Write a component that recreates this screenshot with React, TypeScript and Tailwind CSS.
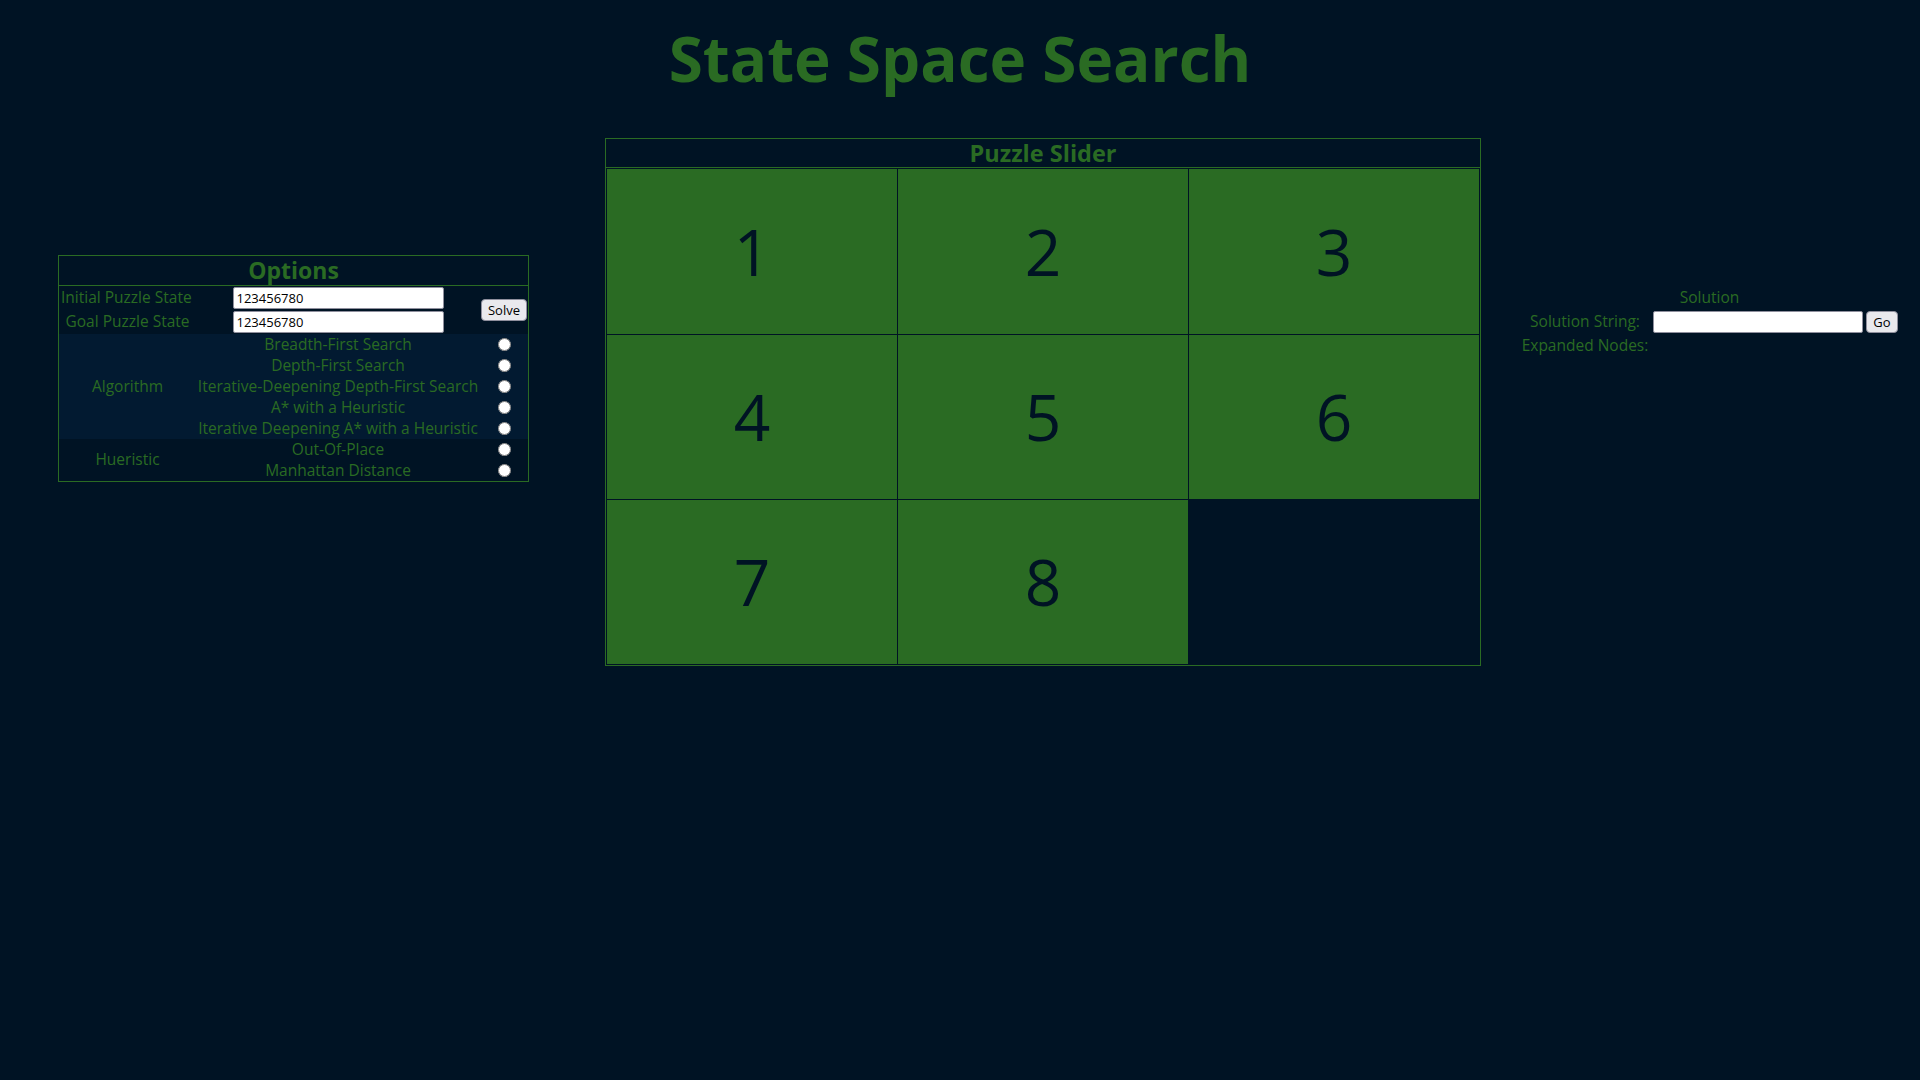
const GREEN = 'text-[#2a6b23]';

const algorithms = [
  'Breadth-First Search',
  'Depth-First Search',
  'Iterative-Deepening Depth-First Search',
  'A* with a Heuristic',
  'Iterative Deepening A* with a Heuristic',
];

const heuristics = ['Out-Of-Place', 'Manhattan Distance'];

const tiles = [1, 2, 3, 4, 5, 6, 7, 8, 0];

function Options() {
  return (
    <div className="w-[471px] ml-[58px] mt-[117px] border border-[#2a6b23] shrink-0">
      {/* Header */}
      <div className="h-[30px] border-b border-[#2a6b23] text-center text-[23px] font-bold leading-[29px]">
        Options
      </div>

      {/* Puzzle states */}
      <div className="grid grid-cols-[137px_284px_48px] grid-rows-[24px_24px]">
        <div className="flex items-center pl-[2px] whitespace-nowrap">Initial Puzzle State</div>
        <div className="flex items-center justify-center">
          <input
            type="text"
            defaultValue="123456780"
            className="w-[211px] h-[22px] bg-white text-black text-[13px] px-[3px] border border-[#8f8f9d] rounded-[2px] outline-none"
          />
        </div>
        <div className="row-span-2 flex items-center justify-center">
          <button className="h-[22px] px-[6px] text-[13px] text-black bg-[#e9e9ed] border border-[#8f8f9d] rounded-[4px] leading-none">
            Solve
          </button>
        </div>
        <div className="flex items-center justify-center whitespace-nowrap">Goal Puzzle State</div>
        <div className="flex items-center justify-center">
          <input
            type="text"
            defaultValue="123456780"
            className="w-[211px] h-[22px] bg-white text-black text-[13px] px-[3px] border border-[#8f8f9d] rounded-[2px] outline-none"
          />
        </div>
      </div>

      {/* Algorithm */}
      <div className="grid grid-cols-[137px_284px_48px] auto-rows-[21px] bg-[#021a31]">
        <div className="row-span-5 flex items-center justify-center">Algorithm</div>
        {algorithms.map((a) => (
          <div key={a} className="contents">
            <div className="flex items-center justify-center whitespace-nowrap leading-[21px]">{a}</div>
            <div className="flex items-center justify-center">
              <input type="radio" name="algorithm" className="m-0 w-[13px] h-[13px]" />
            </div>
          </div>
        ))}
      </div>

      {/* Heuristic */}
      <div className="grid grid-cols-[137px_284px_48px] auto-rows-[21px]">
        <div className="row-span-2 flex items-center justify-center">Hueristic</div>
        {heuristics.map((h) => (
          <div key={h} className="contents">
            <div className="flex items-center justify-center whitespace-nowrap leading-[21px]">{h}</div>
            <div className="flex items-center justify-center">
              <input type="radio" name="heuristic" className="m-0 w-[13px] h-[13px]" />
            </div>
          </div>
        ))}
      </div>
    </div>
  );
}

function PuzzleSlider() {
  return (
    <div className="w-[876px] ml-[76px] border border-[#2a6b23] shrink-0">
      <div className="h-[29px] border-b border-[#2a6b23] text-center text-[23.5px] font-bold leading-[28px]">
        Puzzle Slider
      </div>
      <div className="grid grid-cols-[290px_290px_290px] grid-rows-[165px_164px_164px] gap-px p-px">
        {tiles.map((n) => (
          <div
            key={n}
            className={
              n === 0
                ? 'bg-transparent'
                : 'bg-[#2a6b23] flex items-center justify-center text-[64px] leading-none text-[#001324]'
            }
          >
            {n !== 0 && n}
          </div>
        ))}
      </div>
    </div>
  );
}

function Solution() {
  return (
    <div className="ml-[39px] mt-[148px] w-[379px] shrink-0">
      <div className="h-[24px] flex items-center justify-center">Solution</div>
      <div className="grid grid-cols-[130px_215px_34px] grid-rows-[24px_23px]">
        <div className="flex items-center justify-center whitespace-nowrap">Solution String:</div>
        <div className="flex items-center justify-center">
          <input
            type="text"
            className="w-[210px] h-[22px] bg-white text-black text-[13px] px-[3px] border border-[#8f8f9d] rounded-[2px] outline-none"
          />
        </div>
        <div className="flex items-center justify-center">
          <button className="h-[22px] px-[6px] text-[13px] text-black bg-[#e9e9ed] border border-[#8f8f9d] rounded-[4px] leading-none">
            Go
          </button>
        </div>
        <div className="flex items-center justify-center whitespace-nowrap">Expanded Nodes:</div>
        <div />
        <div />
      </div>
    </div>
  );
}

export default function App() {
  return (
    <div className={`min-h-screen bg-[#001324] ${GREEN} font-['Open_Sans',sans-serif] text-[15.5px]`}>
      <h1 className="pt-[27px] text-center text-[62px] font-bold leading-[62px]">State Space Search</h1>
      <div className="flex items-start mt-[49px]">
        <Options />
        <PuzzleSlider />
        <Solution />
      </div>
    </div>
  );
}
